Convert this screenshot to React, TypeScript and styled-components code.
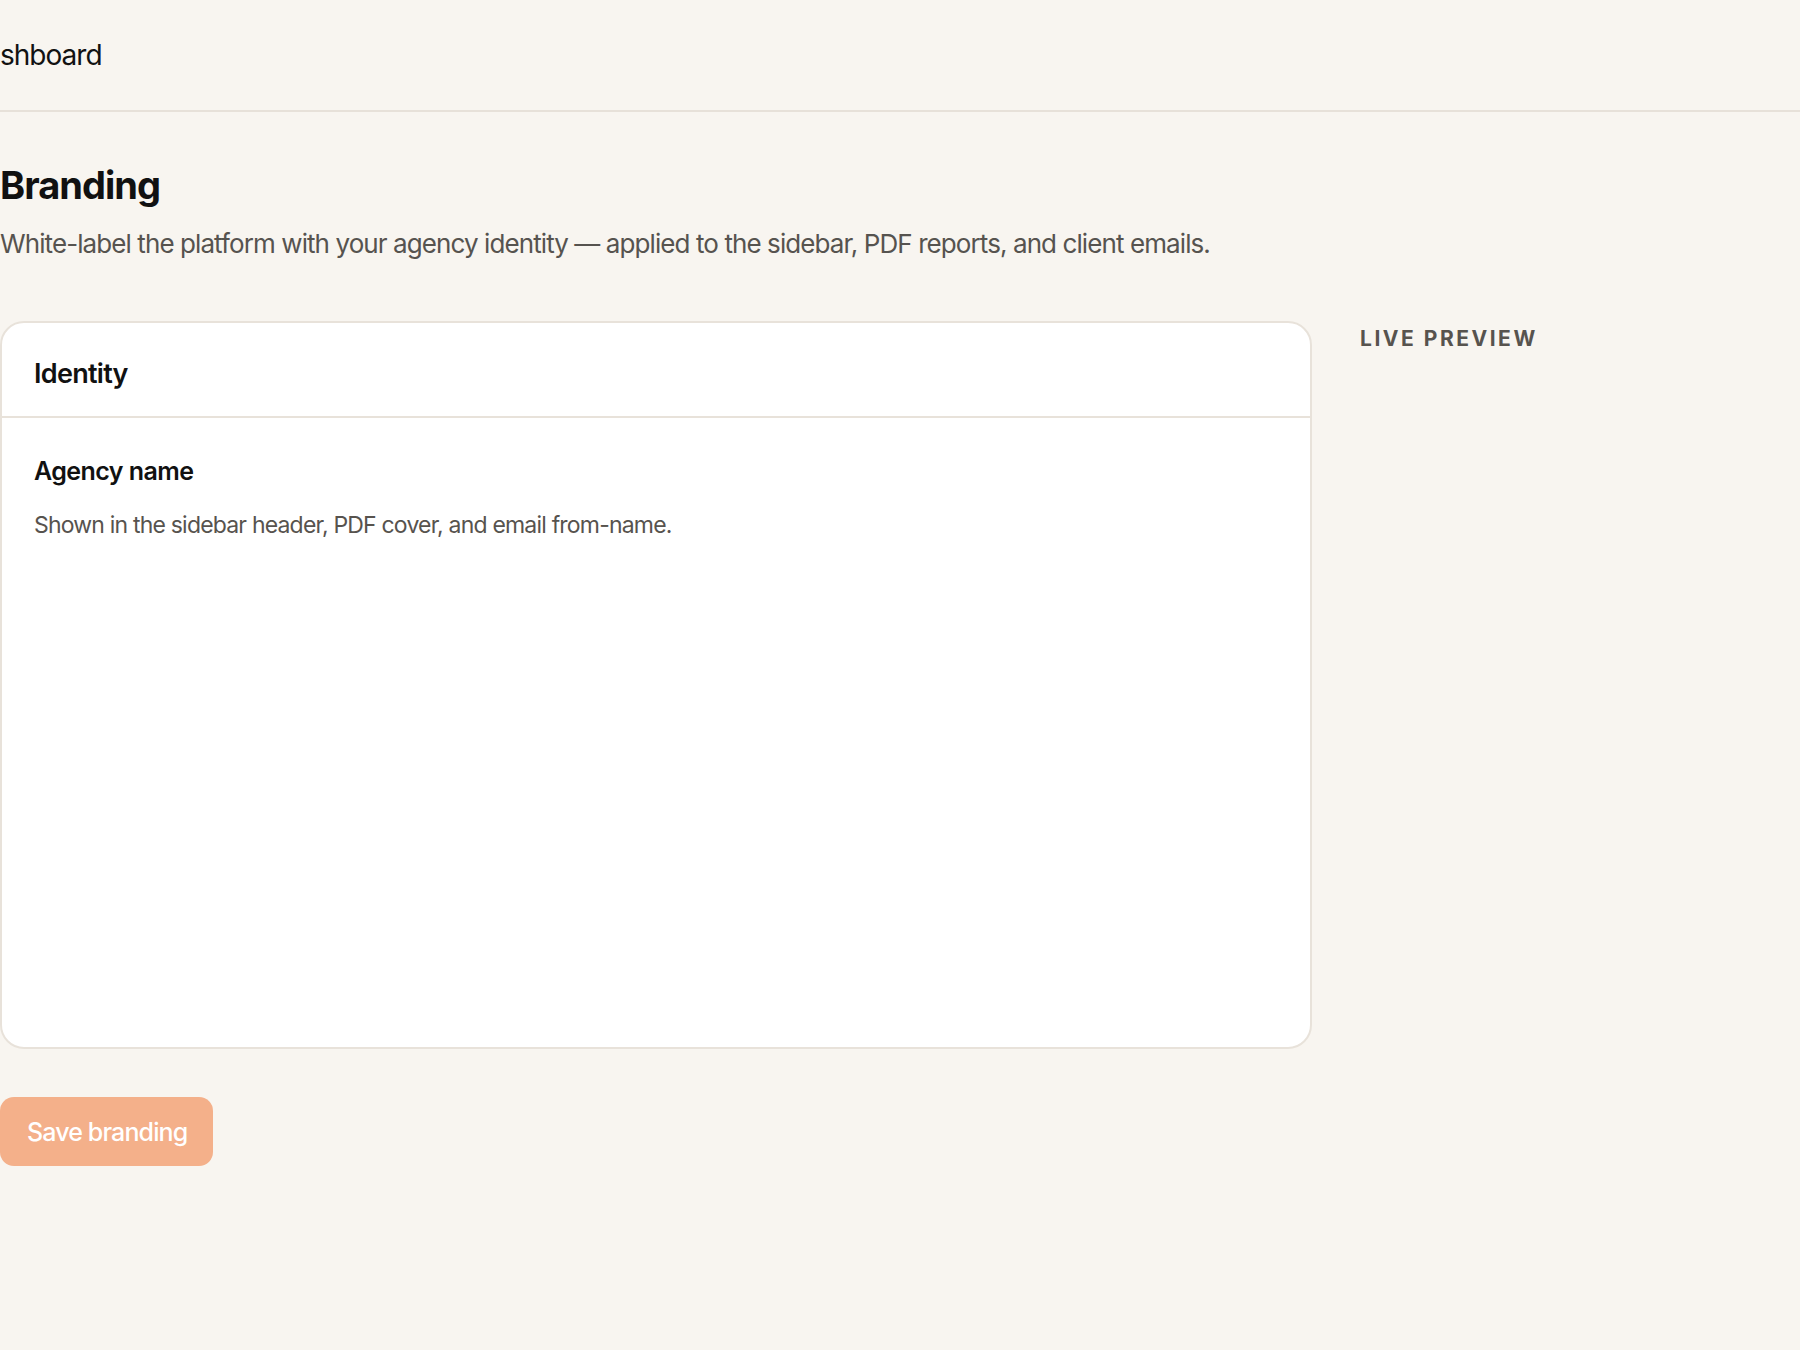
import React from "react";
import styled, { createGlobalStyle } from "styled-components";

const GlobalStyle = createGlobalStyle`
  html, body {
    margin: 0;
    padding: 0;
    background: #f8f5f0;
  }
  body {
    font-family: Inter, "Noto Sans", "Liberation Sans", sans-serif;
    color: #111;
    -webkit-font-smoothing: antialiased;
  }
`;

const Shell = styled.div`
  min-height: 1350px;
  background: #f8f5f0;
  overflow: hidden;
`;

const TopBar = styled.header`
  height: 110px;
  display: flex;
  align-items: center;
  border-bottom: 2px solid #e7e1d9;
  overflow: hidden;
`;

const Crumb = styled.span`
  margin-left: -34px;
  font-size: 28px;
  font-weight: 400;
  letter-spacing: -0.035em;
  color: #121212;
`;

const Main = styled.main`
  padding-top: 50px;
`;

const Title = styled.h1`
  margin: 0;
  font-size: 38px;
  font-weight: 700;
  letter-spacing: -0.025em;
  line-height: 46px;
  color: #111;
`;

const Subtitle = styled.p`
  margin: 19px 0 0 0;
  font-size: 26px;
  line-height: 34px;
  letter-spacing: -0.035em;
  color: #56534f;
`;

const Columns = styled.div`
  display: grid;
  grid-template-columns: 1312px 1fr;
  gap: 47px;
  margin-top: 60px;
  align-items: start;
`;

const Card = styled.section`
  background: #fff;
  border: 2px solid #e8e2da;
  border-radius: 24px;
  min-height: 728px;
  box-sizing: border-box;
`;

const CardHeader = styled.div`
  height: 95px;
  box-sizing: border-box;
  display: flex;
  align-items: center;
  padding: 8px 32px 0;
  border-bottom: 2px solid #e8e2da;
`;

const CardTitle = styled.h2`
  margin: 0;
  font-size: 27px;
  font-weight: 600;
  letter-spacing: -0.026em;
  color: #111;
`;

const CardBody = styled.div`
  padding: 38px 32px;
`;

const FieldLabel = styled.div`
  font-size: 25px;
  font-weight: 600;
  letter-spacing: -0.022em;
  line-height: 30px;
  color: #111;
`;

const FieldHint = styled.div`
  margin-top: 24px;
  font-size: 23px;
  line-height: 30px;
  letter-spacing: -0.035em;
  color: #57534e;
`;

const PreviewLabel = styled.div`
  margin-top: 5px;
  margin-left: 1px;
  font-size: 21px;
  line-height: 26px;
  font-weight: 700;
  letter-spacing: 0.12em;
  text-transform: uppercase;
  color: #57534e;
`;

const Actions = styled.div`
  margin-top: 48px;
  display: flex;
`;

const SaveButton = styled.button`
  height: 69px;
  padding: 0 26px 0 27px;
  border: none;
  border-radius: 14px;
  background: #f4b08a;
  color: #fff;
  font-family: inherit;
  font-size: 25px;
  font-weight: 500;
  letter-spacing: -0.035em;
  cursor: not-allowed;
`;

export default function App() {
  return (
    <>
      <GlobalStyle />
      <Shell>
        <TopBar>
          <Crumb>Dashboard</Crumb>
        </TopBar>
        <Main>
          <Title>Branding</Title>
          <Subtitle>
            White-label the platform with your agency identity — applied to the sidebar, PDF reports, and client emails.
          </Subtitle>
          <Columns>
            <Card>
              <CardHeader>
                <CardTitle>Identity</CardTitle>
              </CardHeader>
              <CardBody>
                <FieldLabel>Agency name</FieldLabel>
                <FieldHint>Shown in the sidebar header, PDF cover, and email from-name.</FieldHint>
              </CardBody>
            </Card>
            <PreviewLabel>Live preview</PreviewLabel>
          </Columns>
          <Actions>
            <SaveButton disabled>Save branding</SaveButton>
          </Actions>
        </Main>
      </Shell>
    </>
  );
}
